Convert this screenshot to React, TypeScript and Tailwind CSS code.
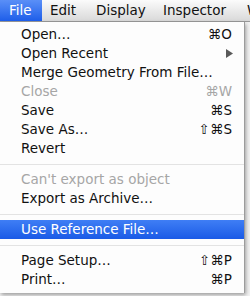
import React from 'react';

type Item =
  | { kind: 'item'; label: string; shortcut?: string; disabled?: boolean; submenu?: boolean; active?: boolean }
  | { kind: 'sep' };

const items: Item[] = [
  { kind: 'item', label: 'Open…', shortcut: '⌘O' },
  { kind: 'item', label: 'Open Recent', submenu: true },
  { kind: 'item', label: 'Merge Geometry From File…' },
  { kind: 'item', label: 'Close', shortcut: '⌘W', disabled: true },
  { kind: 'item', label: 'Save', shortcut: '⌘S' },
  { kind: 'item', label: 'Save As…', shortcut: '⇧⌘S' },
  { kind: 'item', label: 'Revert' },
  { kind: 'sep' },
  { kind: 'item', label: "Can't export as object", disabled: true },
  { kind: 'item', label: 'Export as Archive…' },
  { kind: 'sep' },
  { kind: 'item', label: 'Use Reference File…', active: true },
  { kind: 'sep' },
  { kind: 'item', label: 'Page Setup…', shortcut: '⇧⌘P' },
  { kind: 'item', label: 'Print…', shortcut: '⌘P' },
];

export default function App() {
  return (
    <div
      className="relative h-[296px] w-[250px] overflow-hidden bg-[#f2f2f2] text-[13.5px] text-[#111]"
      style={{ fontFamily: '"DejaVu Sans", Verdana, sans-serif' }}
    >
      {/* menu bar */}
      <div className="flex h-[22px] items-stretch overflow-hidden whitespace-nowrap border-b border-[#9a9a9a] bg-gradient-to-b from-[#fbfbfb] to-[#d9d9d9]">
        <div className="flex w-[42px] shrink-0 items-center bg-gradient-to-b from-[#5a8ff7] to-[#1d5de9] pl-[9px] text-white">
          File
        </div>
        <div className="ml-[8px] flex w-[46px] shrink-0 items-center">Edit</div>
        <div className="flex w-[67px] shrink-0 items-center">Display</div>
        <div className="flex w-[84px] shrink-0 items-center">Inspector</div>
        <div className="flex shrink-0 items-center">W</div>
      </div>

      {/* dropdown */}
      <div className="w-[245px] border-r border-[#9c9c9c] bg-[#fdfdfd] pt-[3px] pb-[4px] shadow-[1px_2px_4px_rgba(0,0,0,0.35)]">
        {items.map((it, i) =>
          it.kind === 'sep' ? (
            <div key={i} className="flex h-[12px] items-center">
              <div className="h-px w-full bg-[#e3e3e3]" />
            </div>
          ) : (
            <div
              key={i}
              className={`flex h-[19px] items-center justify-between pl-[21px] pr-[12px] ${
                it.active ? 'bg-gradient-to-b from-[#3f7ef5] to-[#1a5ae6] text-white' : ''
              } ${it.disabled ? 'text-[#a6a6a6]' : ''}`}
            >
              <span className="whitespace-nowrap">{it.label}</span>
              {it.shortcut && <span className="whitespace-nowrap">{it.shortcut}</span>}
              {it.submenu && (
                <svg width="7" height="9" viewBox="0 0 7 9" className="mr-[-1px]">
                  <path d="M0 0 L7 4.5 L0 9 Z" fill="#5a5a5a" />
                </svg>
              )}
            </div>
          ),
        )}
      </div>
    </div>
  );
}
